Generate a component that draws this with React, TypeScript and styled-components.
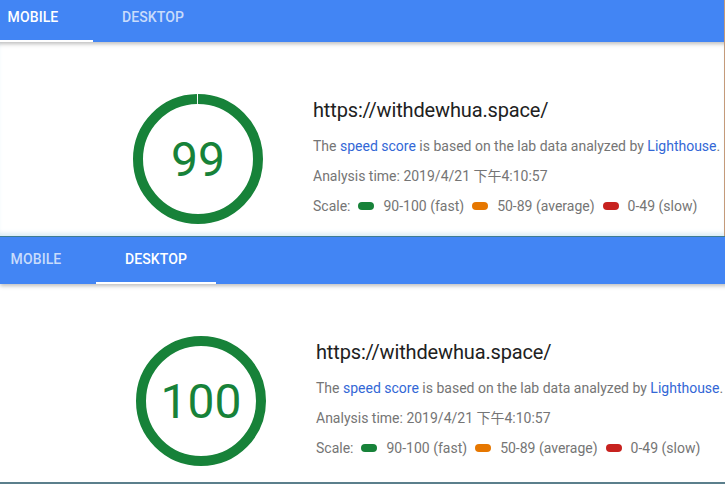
import React from 'react';
import styled, { createGlobalStyle, css } from 'styled-components';

const colors = {
  blue: '#4285f4',
  pass: '#178239',
  average: '#e67700',
  fail: '#c7221f',
  text: '#212121',
  secondary: '#757575',
  link: '#3367d6',
};

const GlobalStyle = createGlobalStyle`
  html, body {
    margin: 0;
    padding: 0;
    background: #fff;
  }
  body {
    font-family: Roboto, "Noto Sans CJK TC", sans-serif;
    -webkit-font-smoothing: antialiased;
  }
`;

interface ReportProps {
  activeTab: 'mobile' | 'desktop';
  score: number;
  cropX: number;
  cropY: number;
  height: number;
  edge?: boolean;
  lower?: boolean;
}

export default function App() {
  return (
    <>
      <GlobalStyle />
      <Page>
        <Report activeTab="mobile" score={99} cropX={-3} cropY={-5} height={236} edge />
        <Report activeTab="desktop" score={100} cropX={0} cropY={0} height={245} lower />
      </Page>
    </>
  );
}

const Report: React.FC<ReportProps> = ({ activeTab, score, cropX, cropY, height, edge, lower }) => (
  <Shot $height={height} $edge={edge} $lower={lower}>
    <Frame $x={cropX} $y={cropY}>
      <TabBar>
        <Tab $active={activeTab === 'mobile'}>Mobile</Tab>
        <Tab $active={activeTab === 'desktop'}>Desktop</Tab>
      </TabBar>
      <Summary>
        <Gauge score={score} />
        <Info>
          <Url>https://withdewhua.space/</Url>
          <Line $first>
            The <Link href="#">speed score</Link> is based on the lab data analyzed by{' '}
            <Link href="#">Lighthouse</Link>.
          </Line>
          <Line>Analysis time: 2019/4/21 下午4:10:57</Line>
          <Line>
            Scale:
            <Legend>
              <Pill $color={colors.pass} />
              90-100 (fast)
            </Legend>
            <Legend>
              <Pill $color={colors.average} />
              50-89 (average)
            </Legend>
            <Legend>
              <Pill $color={colors.fail} />
              0-49 (slow)
            </Legend>
          </Line>
        </Info>
      </Summary>
    </Frame>
  </Shot>
);

const Gauge = ({ score }: { score: number }) => {
  const r = 60;
  const circumference = 2 * Math.PI * r;
  // the arc leaves only a hairline notch below 100
  const arc = score >= 100 ? circumference : circumference - 1.6;
  return (
    <GaugeWrap>
      <svg width="130" height="130" viewBox="0 0 130 130">
        <circle
          cx="65"
          cy="65"
          r={r}
          fill="none"
          stroke={colors.pass}
          strokeWidth="10"
          strokeDasharray={`${arc} ${circumference}`}
          transform="rotate(-90 65 65)"
        />
      </svg>
      <Score>{score}</Score>
    </GaugeWrap>
  );
};

const Page = styled.div`
  width: 725px;
  height: 484px;
  overflow: hidden;
  display: flex;
  flex-direction: column;
`;

const Shot = styled.div<{ $height: number; $edge?: boolean; $lower?: boolean }>`
  position: relative;
  flex: none;
  height: ${(p) => p.$height}px;
  overflow: hidden;
  box-sizing: content-box;
  ${(p) =>
    p.$edge &&
    css`
      border-right: 1px solid #c49a7a;
      box-shadow: inset 0 -5px 4px -2px rgba(150, 200, 225, 0.35);
    `}
  ${(p) =>
    p.$lower &&
    css`
      border-top: 1px solid #3d7c92;
      border-bottom: 2px solid #5b7f8c;
    `}
`;

const Frame = styled.div<{ $x: number; $y: number }>`
  margin-left: ${(p) => p.$x}px;
  margin-top: ${(p) => p.$y}px;
  width: 760px;
`;

const TabBar = styled.div`
  display: flex;
  height: 47px;
  background: ${colors.blue};
  box-shadow: 0 2px 4px rgba(0, 0, 0, 0.26);
  & > :first-child {
    margin-left: -24px;
  }
`;

const Tab = styled.div<{ $active?: boolean }>`
  width: 120px;
  box-sizing: border-box;
  display: flex;
  align-items: center;
  justify-content: center;
  padding-bottom: 2px;
  font-size: 14px;
  font-weight: 500;
  text-transform: uppercase;
  letter-spacing: 0.1px;
  color: ${(p) => (p.$active ? '#fff' : 'rgba(255, 255, 255, 0.72)')};
  border-bottom: 2px solid ${(p) => (p.$active ? '#fff' : 'transparent')};
`;

const Summary = styled.div`
  display: flex;
  align-items: flex-start;
  gap: 50px;
  padding: 52px 0 0 136px;
`;

const GaugeWrap = styled.div`
  position: relative;
  width: 130px;
  height: 130px;
  flex: none;
  svg {
    display: block;
  }
`;

const Score = styled.div`
  position: absolute;
  inset: 0;
  display: flex;
  align-items: center;
  justify-content: center;
  font-size: 48px;
  color: ${colors.pass};
`;

const Info = styled.div`
  display: flex;
  flex-direction: column;
  padding-top: 2px;
  white-space: nowrap;
`;

const Url = styled.div`
  font-size: 20px;
  line-height: 28px;
  letter-spacing: -0.15px;
  color: ${colors.text};
`;

const Line = styled.div<{ $first?: boolean }>`
  display: flex;
  align-items: center;
  margin-top: ${(p) => (p.$first ? '7px' : '0')};
  font-size: 14px;
  line-height: 30px;
  color: ${colors.secondary};
  white-space: pre;
`;

const Link = styled.a`
  color: ${colors.link};
  text-decoration: none;
`;

const Legend = styled.span`
  display: inline-flex;
  align-items: center;
  margin-left: 8px;
`;

const Pill = styled.span<{ $color: string }>`
  display: inline-block;
  width: 16px;
  height: 8px;
  border-radius: 4px;
  margin-right: 9px;
  background: ${(p) => p.$color};
`;
